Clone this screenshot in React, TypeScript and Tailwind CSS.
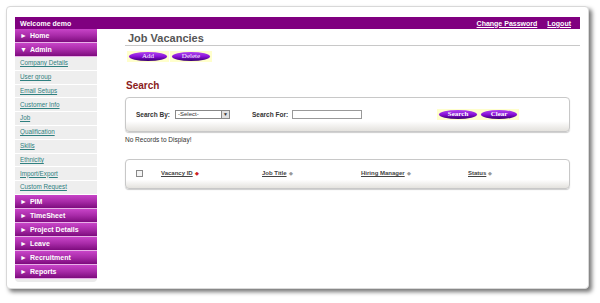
import React from "react";

const font = { fontFamily: '"Liberation Sans", Arial, sans-serif' };

function PurpleBtn({ label, w }: { label: string; w: number }) {
  return (
    <div className="bg-[#ffffcc] px-[2px] py-[1px] flex items-center">
      <div
        className="h-[9px] rounded-[50%] bg-gradient-to-b from-[#b040f0] via-[#8a10d8] to-[#3a0070] flex items-center justify-center text-white text-[7px] leading-none"
        style={{ width: w, fontFamily: '"Liberation Serif", "Times New Roman", serif' }}
      >
        {label}
      </div>
    </div>
  );
}

function MenuItem({ label, open }: { label: string; open?: boolean }) {
  return (
    <div className="h-[14px] border-b border-[#e8b0e8] bg-gradient-to-b from-[#c844c8] via-[#a82aa8] to-[#7e0a7e] flex items-center pl-[5px] text-white font-bold text-[7px] leading-none">
      <span className="text-[7px] mr-[3px]">{open ? "▼" : "►"}</span>
      {label}
    </div>
  );
}

function SubLink({ label }: { label: string }) {
  return (
    <div className="h-[13.8px] border-b border-white flex items-center pl-[5px] text-[6.3px] text-[#2f8080] underline leading-none">
      {label}
    </div>
  );
}

function Sort({ red }: { red?: boolean }) {
  return (
    <span className={`inline-block ml-[2px] text-[5px] ${red ? "text-[#cc2222]" : "text-[#999]"}`}>◆</span>
  );
}

export default function App() {
  return (
    <div className="w-[600px] h-[303px] bg-white overflow-hidden" style={font}>
      <div className="ml-[6px] mt-[6px] w-[583px] h-[283px] rounded-[4px] border border-[#d8d8d8] bg-white shadow-[3px_3px_4px_#777] pl-[8px] pr-[8px] pt-[10px]">
        <div className="h-[12px] bg-[#800080] flex items-center justify-between px-[5px] text-white font-bold text-[7px] leading-none">
          <span>Welcome demo</span>
          <div className="flex gap-[10px] pr-[4px]">
            <span className="underline">Change Password</span>
            <span className="underline">Logout</span>
          </div>
        </div>
        <div className="flex">
          <div className="w-[82px] bg-[#ebebeb] rounded-b-[4px] pb-[3px]">
            <MenuItem label="Home" />
            <MenuItem label="Admin" open />
            <div className="bg-[#eeeeee]">
              {[
                "Company Details",
                "User group",
                "Email Setups",
                "Customer Info",
                "Job",
                "Qualification",
                "Skills",
                "Ethnicity",
                "Import/Export",
                "Custom Request",
              ].map((l) => (
                <SubLink key={l} label={l} />
              ))}
            </div>
            {["PIM", "TimeSheet", "Project Details", "Leave", "Recruitment", "Reports"].map((l) => (
              <MenuItem key={l} label={l} />
            ))}
          </div>
          <div className="flex-1 pl-[28px] pr-[0px]">
            <div className="mt-[4px] h-[13px] border-b border-[#c8c8c8] pl-[3px] text-[11px] font-bold text-[#555] leading-[11px]">
              Job Vacancies
            </div>
            <div className="flex gap-[1px] mt-[5px] pl-[2px]">
              <PurpleBtn label="Add" w={38} />
              <PurpleBtn label="Delete" w={38} />
            </div>
            <div className="mt-[19px] text-[10px] font-bold text-[#8b1c1c] leading-none pl-[1px]">Search</div>
            <div className="mt-[6px] w-[445px] h-[35px] rounded-[4px] border border-[#c8c8c8] bg-gradient-to-b from-white from-70% to-[#e4e2de] shadow-[0_1px_1px_#ccc] flex items-center text-[6.5px] font-bold text-[#333]">
              <span className="ml-[10px]">Search By:</span>
              <div className="ml-[5px] w-[55px] h-[9px] border border-[#888] bg-white flex items-center justify-between text-[6px] font-normal pl-[2px]">
                <span>-Select-</span>
                <span className="w-[8px] h-[7px] bg-[#e0e0e0] border-l border-[#888] text-[5px] flex items-center justify-center">▼</span>
              </div>
              <span className="ml-[22px]">Search For:</span>
              <div className="ml-[4px] w-[70px] h-[9px] border border-[#999] bg-white" />
              <div className="ml-[75px] flex gap-[0px]">
                <PurpleBtn label="Search" w={38} />
                <PurpleBtn label="Clear" w={36} />
              </div>
            </div>
            <div className="mt-[5px] text-[6.5px] text-[#333] leading-none">No Records to Display!</div>
            <div className="mt-[15px] w-[445px] h-[30px] rounded-[4px] border border-[#c8c8c8] bg-gradient-to-b from-white from-70% to-[#e4e2de] shadow-[0_1px_1px_#ccc] flex items-center text-[6px] font-bold text-[#444] underline">
              <div className="ml-[10px] w-[7px] h-[7px] border border-[#888] bg-[#f4f4f4]" />
              <span className="ml-[18px] w-[101px]">Vacancy ID<Sort red /></span>
              <span className="w-[99px]">Job Title<Sort /></span>
              <span className="w-[107px]">Hiring Manager<Sort /></span>
              <span>Status<Sort /></span>
            </div>
          </div>
        </div>
      </div>
    </div>
  );
}
